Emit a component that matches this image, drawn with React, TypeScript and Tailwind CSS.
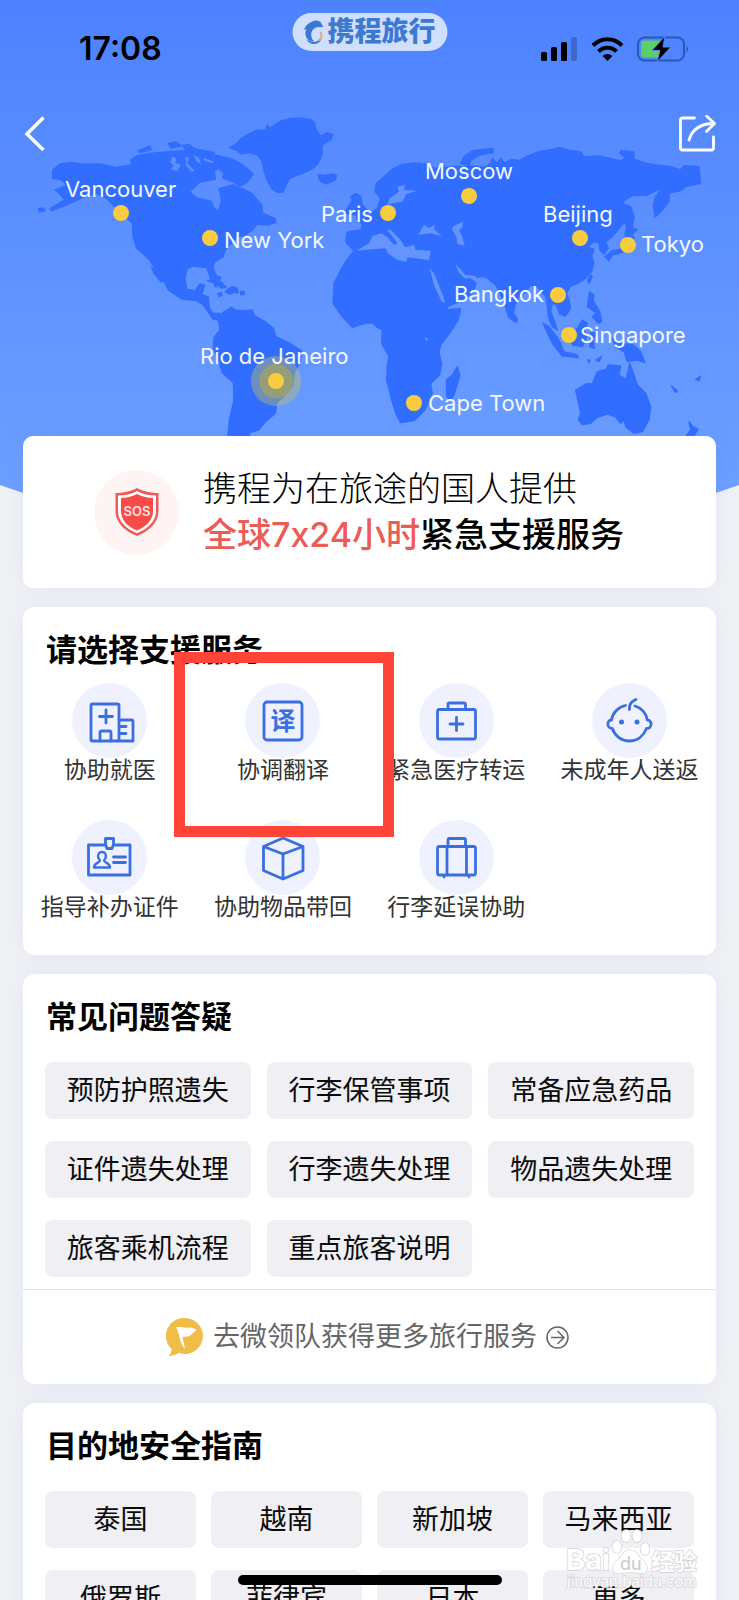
import type { ReactNode } from 'react'

interface City {
    name: string;
    pin: [number, number];
    label: [number, number];
    active?: boolean;
}

interface Service {
    name: string;
    icon: ReactNode;
    highlighted?: boolean;
}

const cities: City[] = [
    { name: 'Vancouver', pin: [121, 213], label: [65, 197] },
    { name: 'New York', pin: [210, 238], label: [224, 248] },
    { name: 'Paris', pin: [388, 213], label: [321, 222] },
    { name: 'Moscow', pin: [469, 196], label: [425, 179] },
    { name: 'Beijing', pin: [580, 238], label: [543, 222] },
    { name: 'Tokyo', pin: [628, 245], label: [641, 252] },
    { name: 'Bangkok', pin: [558, 295], label: [454, 302] },
    { name: 'Singapore', pin: [569, 335], label: [580, 343] },
    { name: 'Rio de Janeiro', pin: [276, 381], label: [200, 364], active: true },
    { name: 'Cape Town', pin: [414, 403], label: [428, 411] },
]

const faqs = [
    '预防护照遗失', '行李保管事项', '常备应急药品',
    '证件遗失处理', '行李遗失处理', '物品遗失处理',
    '旅客乘机流程', '重点旅客说明',
]

const destinations = ['泰国', '越南', '新加坡', '马来西亚', '俄罗斯', '菲律宾', '日本', '更多']

const services: Service[] = [
    {
        name: '协助就医',
        icon: (
            <>
                <rect x="19" y="21" width="28" height="37" rx="1.5" />
                <path d="M47 37h12.5a1.500 1.500 0 0 1 1.500 1.500V58H47M48 43.500h6M48 50.500h6M34 27v13M27.500 33.500h13M28 58V49.500a1.500 1.500 0 0 1 1.500-1.500h8a1.500 1.500 0 0 1 1.500 1.500V58" />
            </>
        ),
    },
    {
        name: '协调翻译',
        highlighted: true,
        icon: (
            <>
                <rect x="19" y="19" width="38" height="38" rx="3" />
                <text x="38" y="47" textAnchor="middle" fontSize="25" fontWeight="700" fill="currentColor" stroke="none">译</text>
            </>
        ),
    },
    {
        name: '紧急医疗转运',
        icon: (
            <>
                <rect x="18.500" y="26.500" width="38" height="29.500" rx="2" />
                <path d="M29 26v-4.500a1.500 1.500 0 0 1 1.500-1.500h14.500a1.500 1.500 0 0 1 1.500 1.500V26M37.500 34.500v13M31 41h13" />
            </>
        ),
    },
    {
        name: '未成年人送返',
        icon: (
            <>
                <path d="M33.500 22.500C26 24 20.500 30 19.500 37c-5 0-5 8.500.8 8.500C23 53 29.500 58 37.300 58S51.500 53 54.500 45.500c6 0 6-8.500.8-8.500C54 30 49.500 25 43 23M37.500 26.500c-.5-5 2.500-8.500 6.500-10" />
                <circle cx="29.500" cy="39" r="2.500" fill="currentColor" stroke="none" />
                <circle cx="45" cy="39" r="2.500" fill="currentColor" stroke="none" />
            </>
        ),
    },
    {
        name: '指导补办证件',
        icon: (
            <>
                <path d="M33 25H16.500v30h41.500V25H42M33.500 18.500h8v6l-1.500 4h-5l-1.500-4zM41.500 37h12M41.500 42.500h12" />
                <path strokeWidth="2.400" d="M30 32c-3 0-4.200 2.200-3.800 4.800.2 1.600.8 2.700 1.800 3.700-.2 2.300-6 2.200-6 7h16c0-4.800-5.800-4.700-6-7 1-1 1.600-2.100 1.800-3.700.4-2.600-.8-4.800-3.800-4.800z" />
            </>
        ),
    },
    {
        name: '协助物品带回',
        icon: <path d="M38 18l20 8.500v24L38 59 18.500 50.500v-24zM18.500 26.500L38 34l20-7.500M38 34v25" />,
    },
    {
        name: '行李延误协助',
        icon: (
            <>
                <rect x="18.500" y="26.500" width="38" height="28.500" rx="2" />
                <path d="M29 26v-6a1.500 1.500 0 0 1 1.500-1.500h14.500a1.500 1.500 0 0 1 1.500 1.500v6M28 27v28M47.500 27v28M25 56.500v.5M50 56.500v.5" />
            </>
        ),
    },
]

const americas = [
    // Greenland and Iceland
    'M688 443l22-12 14-16 24-14 18-9 32-2 4-16 6 12 14-10 24-14 24-6 32-2 30 4 12 10 3 20 10 14 4 8 20-12 18 6-6 14-22 14-6 10 2 16-6 18-8 16-16 14-24 12-28 10-16 8-10 18-10 22-14 2-18-10-16-28-10-32-6-26-10-16-28-8-24 4-14-12z',
    'M954 524l22 2 18-4 16 4-4 14-26 12-20-8z',
    // North America
    'M158 510L180 492L215 487L245 492L300 492L345 502L395 495L392 480L410 468L450 460L500 456L560 452L600 458L650 466L700 478L735 500L760 522L740 548L715 560L755 580L785 615L788 640L825 655L828 668L800 675L770 672L758 690L735 705L710 712L675 750L670 770L645 785L638 800L652 835L648 862L632 835L620 803L580 798L560 808L555 835L560 868L585 872L600 852L614 855L605 885L625 890L628 925L640 940L660 940L655 960L640 958L610 915L590 902L545 897L505 870L480 820L455 790L450 780L410 745L398 705L398 670L375 650L345 620L320 595L290 580L255 590L200 615L155 632L150 626L195 600L178 580L165 570L200 555L185 540L158 535Z',
    'M115 626l16-2 4 8-16 4zM505 430l24-4 14 12-30 6zM415 452l34-14 6 10-34 10zM548 436l20-2 16 12 60 12-20 8-66-14zM455 800L470 812L488 845L482 845L462 820Z',
    'M622 842l22-4 22 10 12 14-14 2-18-14zM680 870l16-10 14 4 6 14-16 0-12 4-12-6zM722 874l10 0 0 10-10 0zM654 880l10-2 2 8-10 4zM652 828l10 4-2 8-8-4z',
    // South America
    'M655 958L668 938L695 922L705 930L730 932L758 930L762 946L800 968L820 985L828 1010L870 1030L905 1053L900 1085L882 1120L878 1160L850 1190L830 1210L826 1240L800 1262L775 1290L750 1298L748 1308L683 1308L690 1250L702 1200L700 1148L668 1120L655 1080L640 1045L642 1012L660 990Z',
].join('')

const oldWorld = [
    // Europe, Asia and Africa
    'M168 185L172 160L195 140L220 118L250 103L285 99L320 102L350 115L420 108L430 112L470 108L500 112L515 100L520 85L532 102L545 85L556 100L575 88L600 92L625 78L660 65L700 58L720 52L745 60L785 66L795 80L840 78L885 88L905 92L920 84L902 70L905 62L945 66L945 78L940 85L975 98L1010 105L1055 110L1085 120L1095 107L1140 110L1145 160L1100 170L1085 182L1050 190L1050 215L1030 240L1008 262L1003 225L1010 200L1030 175L1005 185L985 195L940 197L915 212L912 222L935 230L945 260L940 290L930 300L922 292L918 275L905 290L880 320L860 335L868 355L855 372L843 360L840 340L825 335L812 345L808 352L825 358L818 378L825 400L818 425L800 445L775 460L755 468L748 480L742 492L750 510L755 535L740 558L722 552L712 525L700 520L695 545L705 570L715 600L700 590L688 560L685 525L680 500L655 470L635 465L620 485L595 505L588 525L580 570L568 560L555 515L540 485L530 465L500 440L450 443L472 460L460 490L420 515L385 530L384 540L425 535L418 570L395 605L365 645L360 670L368 700L362 735L335 760L340 790L318 840L285 872L245 878L230 850L218 810L203 750L205 705L210 680L188 640L190 600L175 592L160 578L130 582L100 592L70 560L42 520L45 460L60 430L80 395L105 362L88 345L80 335L85 305L125 300L130 285L112 262L150 255L175 235L185 205Z',
    // Novaya Zemlya, Britain
    'M425 100L435 80L460 62L522 55L522 68L480 75L455 92L450 108ZM85 235L100 210L95 200L110 190L125 200L130 225L150 245L130 255L110 255L80 250Z',
    // Madagascar, Sri Lanka, Taiwan
    'M415 710L423 735L405 795L395 810L383 800L382 750L400 735ZM585 552L595 565L592 577L583 572ZM815 435L820 440L810 460L806 450Z',
    // Indonesia, Philippines, New Guinea
    'M672 580L690 590L720 630L735 665L775 675L778 683L730 678L700 640ZM750 610L775 595L790 570L805 580L795 600L805 615L790 650L760 645ZM815 605L835 612L822 625L826 655L812 650ZM805 690L813 690L810 698ZM830 690L848 680L840 695Z',
    'M812 485L825 495L822 510L833 530L842 545L848 575L838 580L820 560L832 548L805 530ZM880 625L905 640L945 645L965 665L978 698L955 690L925 695L915 665L890 650Z',
    // Japan
    'M925 285L955 300L940 312L948 335L930 360L880 375L870 392L858 380L880 362L905 358L925 330L918 315Z',
    // Australia and New Zealand
    'M770 780L800 762L820 760L835 725L862 718L868 705L905 708L900 735L922 748L932 700L945 735L955 765L980 790L995 830L990 870L970 905L945 910L920 890L915 870L905 880L888 860L865 852L835 862L815 880L790 884L778 870L785 850ZM1110 875L1122 890L1137 898L1125 917L1103 917L1115 900ZM1130 748L1145 738L1140 752ZM1057 768L1075 782L1070 788Z',
].join('')

// Hudson Bay and the arctic straits
const westSeas = [
    'M600 548L572 575L590 592L635 602L645 625L655 630L662 600L655 565L700 552L718 562L735 572L700 548L665 535L670 520L655 508L645 512L648 540Z',
    'M516 470l14 4-4 14 16 6-10 20-20-6 10-12-12-8zM556 470l12 4-6 16 22 22-8 4-18-18zM580 466l16 6 8 20-14-6zM610 474l30 10-2 6-26-8z',
].join('')

// Baltic, Mediterranean, Black, Caspian and Red seas, Persian Gulf
const eastSeas = [
    'M205 225L212 205L240 185L235 170L258 165L255 180L295 182L262 192L250 215L225 218Z',
    'M112 362L150 340L160 318L188 310L205 322L225 345L236 340L205 300L212 298L245 330L258 352L285 345L290 360L335 362L330 390L290 385L265 382L262 395L235 390L205 368L200 355L160 358Z',
    'M298 314L315 285L330 294L348 285L345 298L368 318L335 310ZM400 290L432 275L430 292L420 300L430 320L437 347L415 342L412 320L400 300Z',
    'M332 415L345 430L375 505L378 518L368 515L345 465ZM410 403L440 435L470 438L472 445L435 445L418 425ZM318 625L328 624L322 634Z',
].join('')

const WorldMap = () => (
    <svg viewBox="0 0 739 436" className="absolute inset-0 w-full h-full overflow-visible" aria-hidden="true">
        <defs>
            <linearGradient id="sky" x1="0" y1="0" x2="0" y2="1">
                <stop offset="0" stopColor="#4d82ff" />
                <stop offset="1" stopColor="#71a3ff" />
            </linearGradient>
        </defs>
        <path d="M0 0H739V485Q369 620 0 485Z" fill="url(#sky)" />
        <g transform="scale(.33333)" fill="#316dff" stroke="#316dff" strokeWidth="4" strokeLinejoin="round">
            <path d={americas} />
            <path d={westSeas} fill="#5c8eff" stroke="none" />
            <g transform="translate(957 390)">
                <path d={oldWorld} />
                <path d={eastSeas} fill="#6495ff" stroke="none" />
            </g>
        </g>
        {cities.map(c => (
            <g key={c.name}>
                {c.active && (
                    <>
                        <circle cx={c.pin[0]} cy={c.pin[1]} r="25" fill="#c9c25a" opacity=".4" />
                        <circle cx={c.pin[0]} cy={c.pin[1]} r="17" fill="#b9a93c" opacity=".55" />
                    </>
                )}
                <circle cx={c.pin[0]} cy={c.pin[1]} r="8" fill="#f9cb3f" />
                <text x={c.label[0]} y={c.label[1]} fontSize="22" fill="#f4f8ff">{c.name}</text>
            </g>
        ))}
    </svg>
)

const StatusBar = () => (
    <div className="relative h-[98px] pl-[79px] pr-[49px] flex items-center justify-between">
        <span className="text-[32px] font-semibold text-black">17:08</span>
        <svg width="150" height="26" viewBox="0 0 150 26" aria-hidden="true">
            <rect x="1" y="16" width="6" height="9" rx="1.500" />
            <rect x="11" y="11" width="6" height="14" rx="1.500" />
            <rect x="21" y="6" width="6" height="19" rx="1.500" />
            <rect x="31" y="1" width="6" height="24" rx="1.500" fill="#3f68cf" />
            <g fill="none" stroke="#000" strokeWidth="4">
                <path d="M53 9.500a20 20 0 0 1 29 0" />
                <path d="M58.500 15.500a12.500 12.500 0 0 1 18 0" />
            </g>
            <path d="M62.500 20a7.500 7.500 0 0 1 10 0l-5 5z" />
            <rect x="98" y="1.500" width="46" height="23" rx="6.500" fill="none" stroke="#2c55b8" strokeWidth="2" />
            <path d="M146.500 9.500q3 3.500 0 7z" fill="#2c55b8" />
            <path d="M121 4.500H104.500a3.500 3.500 0 0 0-3.500 3.500v10a3.500 3.500 0 0 0 3.500 3.500H121z" fill="#5bd065" />
            <path d="M125 0l-13 14.500h8L117 26l14-15h-8z" stroke="#5083ff" strokeWidth="1" />
        </svg>
        <div className="absolute top-[13px] left-1/2 -translate-x-1/2 h-[38px] w-[155px] rounded-full bg-[#cfdfff] flex items-center justify-center gap-1">
            <svg width="20" height="24" viewBox="0 0 20 24" aria-hidden="true">
                <path d="M0 10C2 8 2 5 6 3c3-2 6-3 9-2 2 .5 3 2 3 3l2 3c-2 0-3 .5-5 0-2 0-4 1-5 2-2 2-3 5-2 8 .5 2 1 3 3 4.500C7 22 2 19 2 14c0-2 0-3 1-5z" fill="#3a78d4" />
                <path d="M3 19c2 2 5 3 8 3 3-.5 5-2 6-4l1 1c-1 3-4 5-8 5-4-.5-6-2-7-5z" fill="#3a78d4" />
                <path d="M17 12c2 3 1 7-2 8.500" fill="none" stroke="#e9a66c" strokeWidth="2" />
            </svg>
            <span className="text-[27px] leading-[36px] font-black text-[#3d79d0]">携程旅行</span>
        </div>
    </div>
)

const Card = ({ title, children }: { title: string; children: ReactNode }) => (
    <section className="relative rounded-[12px] bg-white pt-[22px] shadow-[0_0_24px_rgba(80,110,220,0.08)]">
        <h2 className="px-[23px] text-[31px] leading-[42px] font-bold text-black">{title}</h2>
        {children}
    </section>
)

const Chip = ({ children }: { children: ReactNode }) => (
    <button className="h-[57px] rounded-[8px] bg-[#efeff4] text-[27px] leading-[40px] text-[#0b0b0c] whitespace-nowrap">
        {children}
    </button>
)

const Watermark = () => (
    <svg width="136" height="66" viewBox="0 0 136 66" className="absolute right-[39px] bottom-[10px]" aria-hidden="true">
        <g fill="#fff" stroke="#d3d3d8" strokeWidth="1.500" paintOrder="stroke">
            <text x="2" y="46" fontSize="29" fontWeight="700">Bai</text>
            <path d="M66 26c6 0 8 6 11 9 4 3 6 5 6 9 0 5-4 6-8 5-6-1-12-1-18 0-4 1-8 0-8-5 0-4 3-6 6-9 3-4 5-9 11-9z" />
            <ellipse cx="53" cy="23" rx="4.500" ry="6" />
            <ellipse cx="62" cy="12" rx="4.500" ry="6" />
            <ellipse cx="73" cy="12" rx="4.500" ry="6" />
            <ellipse cx="81" cy="25" rx="4.500" ry="6" />
            <text x="87" y="46" fontSize="23" fontWeight="700">经验</text>
            <text x="3" y="63" fontSize="15">jingyan.baidu.com</text>
        </g>
        <text x="56" y="46" fontSize="18" fill="#c9c9d0">du</text>
    </svg>
)

const App = () => {
    return (
        <div className="relative h-screen overflow-hidden bg-[#f0f1f5] font-['Inter','Noto_Sans_CJK_SC',sans-serif]">
            <header className="relative aspect-[739/436]">
                <WorldMap />
                <StatusBar />
                <nav className="relative h-[72px] px-[23px] flex items-center justify-between">
                    <button aria-label="返回">
                        <svg width="24" height="36" viewBox="0 0 24 36" fill="none" stroke="#fff" strokeWidth="3.500">
                            <path d="M20.500 1.500L4 18l16.500 16" />
                        </svg>
                    </button>
                    <button aria-label="分享">
                        <svg width="38" height="38" viewBox="0 0 38 38" fill="none" stroke="#fff" strokeWidth="2.800" strokeLinecap="round" strokeLinejoin="round">
                            <path d="M16.500 3H4.500A2 2 0 0 0 2.500 5v28a2 2 0 0 0 2 2h29a2 2 0 0 0 2-2V22" />
                            <path d="M11 25C14 15 22 8.500 36 8.500M28.500 1l8 7.500-8 8" />
                        </svg>
                    </button>
                </nav>
            </header>

            <main className="relative px-[23px] flex flex-col gap-[19px]">
                <section className="h-[152px] rounded-[10px] bg-white pl-[71px] flex items-center gap-6 shadow-[0_0_24px_rgba(80,110,220,0.08)]">
                    <div className="w-[85px] h-[85px] shrink-0 rounded-full bg-[#fff4f4] flex items-center justify-center">
                        <svg width="46" height="50" viewBox="0 0 46 50" aria-label="SOS">
                            <path d="M23 1C29 4.500 37 6 44.500 6V24c0 12-9.500 20-21.500 25C11 44 1.500 36 1.500 24V6C9 6 17 4.500 23 1z" fill="#ef5a58" />
                            <path d="M23 4C28 7 35 8.500 42 8.500v15.500c0 10-7.500 17.500-19 22.300C11.500 41.500 4 34 4 24V8.500C11 8.500 18 7 23 4z" fill="#fff" />
                            <path d="M23 7C28 9.500 34 11 39 11v13c0 9-6.500 15.500-16 19.500C13.500 39.500 7 33 7 24V11C12 11 18 9.500 23 7z" fill="#f94b48" />
                            <text x="23" y="29" textAnchor="middle" fontSize="13" fontWeight="600" fill="#ffe3e2">SOS</text>
                        </svg>
                    </div>
                    <p className="text-[34px] leading-[46px] whitespace-nowrap text-black">
                        <span className="block font-light">携程为在旅途的国人提供</span>
                        <strong className="block font-medium"><span className="text-[#ec5c57]">全球7x24小时</span>紧急支援服务</strong>
                    </p>
                </section>

                <Card title="请选择支援服务">
                    <div className="mt-[12px] pb-[35px] grid grid-cols-4 gap-y-[37px]">
                        {services.map(s => (
                            <button key={s.name} className="relative flex flex-col items-center text-[23px] leading-[25px] whitespace-nowrap text-[#333]">
                                <span className="w-[75px] h-[75px] rounded-full bg-[#eff2fe] text-[#3a6fe0]">
                                    <svg viewBox="0 0 75 75" fill="none" stroke="currentColor" strokeWidth="2.800" strokeLinecap="round" strokeLinejoin="round" aria-hidden="true">
                                        {s.icon}
                                    </svg>
                                </span>
                                {s.name}
                                {s.highlighted && (
                                    <span className="absolute z-10 -left-[22px] -right-[24px] -top-[31px] -bottom-[54px] border-[11px] border-[#ff4537] pointer-events-none" />
                                )}
                            </button>
                        ))}
                    </div>
                </Card>

                <Card title="常见问题答疑">
                    <div className="mt-[24px] px-[22px] grid grid-cols-3 gap-x-4 gap-y-[22px]">
                        {faqs.map(q => <Chip key={q}>{q}</Chip>)}
                    </div>
                    <a href="#guide" className="mt-[12px] h-[95px] pr-1 border-t border-[#e4e4e8] flex items-center justify-center gap-[9px] text-[27px] text-[#666]">
                        <svg width="38" height="38" viewBox="0 0 38 38" aria-hidden="true">
                            <path d="M19 0a18 18 0 1 1-6 35C9 37 6 38 2.500 38c2-2 3-4.500 3-7A18 18 0 0 1 19 0z" fill="#f0bd48" />
                            <path d="M10 9.500c5-2.500 8 1.500 13 0 2 0 4 .5 8 2.500-4 2-5 6-10 6.500-2 .3-4 0-4.500.5l2.500 12c-4-5-5-9-6-14-.7-3-1.500-5-3-7.500z" fill="#fff" />
                        </svg>
                        <span>去微领队获得更多旅行服务</span>
                        <svg width="23" height="23" viewBox="0 0 23 23" fill="none" stroke="currentColor" strokeWidth="1.500" aria-hidden="true">
                            <circle cx="11.500" cy="11.500" r="10.500" />
                            <path d="M5 11.500h12.500M11.500 5l6.500 6.500-6.500 6.500" />
                        </svg>
                    </a>
                </Card>

                <Card title="目的地安全指南">
                    <div id="guide" className="mt-[24px] px-[22px] pb-[22px] grid grid-cols-4 gap-x-[15px] gap-y-[22px]">
                        {destinations.map(d => <Chip key={d}>{d}</Chip>)}
                    </div>
                </Card>
            </main>

            <Watermark />
            <div className="absolute bottom-[15px] left-1/2 -translate-x-1/2 w-[264px] h-[10px] rounded-full bg-black" />
        </div>
    )
}

export default App
